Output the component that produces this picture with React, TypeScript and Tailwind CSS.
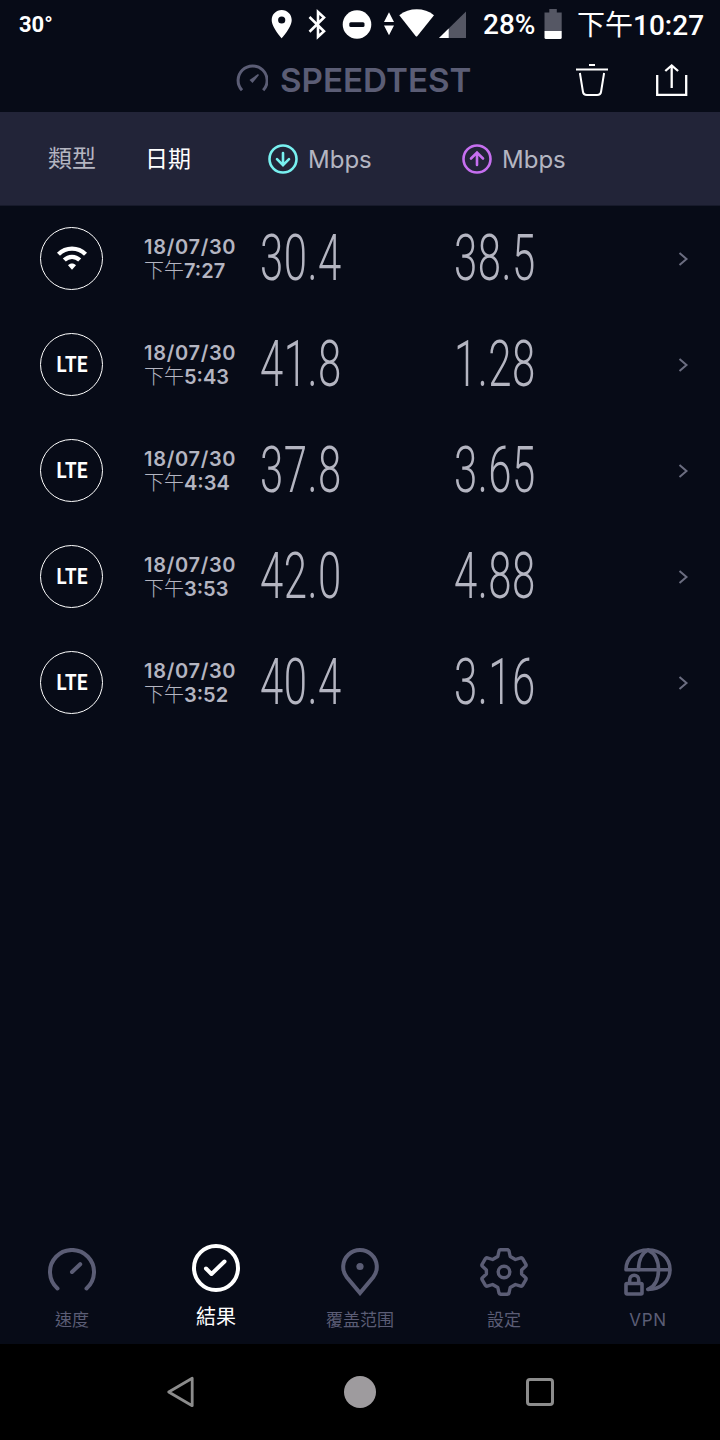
import React, { useState } from 'react';

interface Result {
  id: number;
  type: 'wifi' | 'lte';
  date: string;
  time: string;
  download: string;
  upload: string;
}

const results: Result[] = [
  { id: 1, type: 'wifi', date: '18/07/30', time: '7:27', download: '30.4', upload: '38.5' },
  { id: 2, type: 'lte', date: '18/07/30', time: '5:43', download: '41.8', upload: '1.28' },
  { id: 3, type: 'lte', date: '18/07/30', time: '4:34', download: '37.8', upload: '3.65' },
  { id: 4, type: 'lte', date: '18/07/30', time: '3:53', download: '42.0', upload: '4.88' },
  { id: 5, type: 'lte', date: '18/07/30', time: '3:52', download: '40.4', upload: '3.16' },
];

function StatusBar() {
  return (
    <div className="flex h-12 items-center whitespace-nowrap pl-[19px] font-['Roboto','Noto_Sans_CJK_TC',sans-serif] text-white">
      <span className="w-[252px] pt-px text-[22px] font-bold leading-none">30°</span>
      <svg className="h-12 w-[296px] shrink-0" viewBox="271 0 296 48" fill="#fff">
        {/* Location */}
        <path fillRule="evenodd" d="M281.7 10c-5.6 0-10 4.4-10 10 0 7.300 10 18.300 10 18.300s10-11 10-18.300c0-5.600-4.400-10-10-10zm0 13.600a3.600 3.600 0 1 1 0-7.200 3.600 3.600 0 0 1 0 7.200z" />
        {/* Bluetooth */}
        <path d="M309.500 17l14.500 14.200-6 5.500V12l6 5.500-14.500 14.200" fill="none" stroke="#fff" strokeWidth="2.600" />
        {/* Do not disturb */}
        <circle cx="357" cy="24.500" r="14.300" />
        <rect x="349.300" y="22.200" width="15.200" height="4.800" rx="1.500" fill="#070b17" />
        {/* Data arrows */}
        <path d="M389 12.300l5 9.700h-10zM389 35.300l5-9.700h-10z" />
        {/* Wifi signal */}
        <path d="M399.300 15.200C409 7.300 424.500 7.300 434 15.200L417.400 36q-.9 1.100-1.800 0z" />
        {/* Cell signal */}
        <path d="M466 11.500V38h-27z" fill="#555764" />
        <path d="M448.700 28.500V38H439z" />
        {/* Battery */}
        <path d="M544.500 12.500h4.800V9h7.500v3.500h4.900V31h-17.200z" fill="#555764" />
        <path d="M544.500 31h17.200v6.500q0 1.500-1.500 1.500H546q-1.500 0-1.500-1.500z" />
      </svg>
      <span className="-ml-[84px] w-[94px] pt-0.5 text-[28px] font-medium leading-none">28%</span>
      <span className="pt-[3px] text-[28px] font-medium leading-none">
        <span className="font-normal">下午</span>10:27
      </span>
    </div>
  );
}

function TitleBar() {
  return (
    <header className="flex h-16 items-center pl-[236px]">
      <svg className="h-8 w-8 shrink-0" viewBox="0 0 32 32" fill="none" stroke="#5b5d75" strokeWidth="3">
        <path d="M6 26.300A14.500 14.500 0 1 1 27.200 26.300" />
        <path d="M13.500 16l8.500-6 1 1-6.500 8z" fill="#5b5d75" stroke="none" />
      </svg>
      <h1 className="ml-3 w-[296px] font-['Inter',sans-serif] text-[33px] font-semibold leading-none text-[#5b5d75]">
        <span className="inline-block origin-left scale-x-[1.005]">SPEEDTEST</span>
      </h1>
      <button aria-label="Delete">
        <svg className="h-8 w-8" viewBox="0 0 32 32" fill="none" stroke="#fff" strokeWidth="2">
          <path d="M13 1h6M0 5.600h32" />
          <path d="M3.900 9l3 18.500q.5 3.500 4 3.500h10.200q3.500 0 4-3.500l3-18.500" />
        </svg>
      </button>
      <button aria-label="Share" className="ml-12">
        <svg className="h-8 w-8" viewBox="0 0 32 32" fill="none" stroke="#fff" strokeWidth="2.300">
          <path d="M1.200 11v19.800h29V11M15.700 24V1.500M9.300 7l6.400-5.500L22.100 7" />
        </svg>
      </button>
    </header>
  );
}

function DirectionIcon({ up }: { up?: boolean }) {
  return (
    <svg className="h-[30px] w-[30px] shrink-0" viewBox="0 0 30 30" fill="none" stroke={up ? '#c66ff0' : '#78f0f0'} strokeWidth="2.600" strokeLinecap="round">
      <circle cx="15" cy="15" r="13.500" />
      {up ? (
        <path d="M15 21V8.500M9 14.500l6-6 6 6" />
      ) : (
        <path d="M15 9v12M9 15.200l6 6 6-6" />
      )}
    </svg>
  );
}

function ColumnHeader() {
  return (
    <div className="flex h-[94px] items-center border-b border-[#171a2b] bg-[#222438] pl-12 font-['Inter','Noto_Sans_CJK_TC',sans-serif] text-2xl leading-none text-[#b4b5c1]">
      <span className="w-[97px]">類型</span>
      <span className="w-[123px] pt-px text-[23px] text-white">日期</span>
      <div className="flex w-[194px] items-center gap-2.5">
        <DirectionIcon />
        <span className="pt-[3px]">Mbps</span>
      </div>
      <div className="flex items-center gap-2.5">
        <DirectionIcon up />
        <span className="pt-[3px]">Mbps</span>
      </div>
    </div>
  );
}

function TypeBadge({ type }: { type: Result['type'] }) {
  return (
    <div className="mb-0.5 flex h-[63px] w-[63px] shrink-0 items-center justify-center rounded-full border-[1.5px] border-white">
      {type === 'wifi' ? (
        <svg className="h-6 w-8" viewBox="0 0 32 24" fill="none" stroke="#fff" strokeWidth="4.300">
          <path d="M2.500 8.200C10 .7 22 .7 29.500 8.200" />
          <path d="M8.300 14c4.400-4.300 11-4.300 15.400 0" />
          <path d="M12 19.300c2.300-2.300 5.700-2.300 8 0L16 23.700z" fill="#fff" stroke="none" />
        </svg>
      ) : (
        <span className="inline-block scale-x-[0.85] pl-0.5 pt-0.5 font-['Roboto',sans-serif] text-[22px] font-bold leading-none tracking-[0.5px] text-white">LTE</span>
      )}
    </div>
  );
}

function Speed({ value }: { value: string }) {
  return (
    <div className="w-[194px] pb-0.5">
      <span className="inline-block origin-left scale-x-[0.645] font-['Roboto',sans-serif] text-[65px] font-light leading-none tracking-[0.8px] text-[#b4b5c1]">
        {value}
      </span>
    </div>
  );
}

function ResultRow({ result }: { result: Result }) {
  return (
    <div className="flex h-[106px] items-center pl-10">
      <TypeBadge type={result.type} />
      <div className="ml-[41px] w-[116px] whitespace-nowrap pb-px font-['Inter','Noto_Sans_CJK_TC',sans-serif] text-xl font-semibold leading-6 text-[#b4b5c1]">
        <div className="tracking-[0.7px]">{result.date}</div>
        <div>
          <span className="font-light">下午</span>
          {result.time}
        </div>
      </div>
      <Speed value={result.download} />
      <Speed value={result.upload} />
      <svg className="ml-[30px] h-4 w-3" viewBox="0 0 12 16" fill="none" stroke="#6b6d80" strokeWidth="2">
        <path d="M1.500 2l7 6-7 6" />
      </svg>
    </div>
  );
}

const tabs = [
  {
    label: '速度',
    icon: (
      <>
        <path d="M9.500 40.500A22 22 0 1 1 38.500 40.500" />
        <path d="M24 24l8.200-7.800" />
      </>
    ),
  },
  {
    label: '結果',
    icon: (
      <>
        <circle cx="24" cy="24" r="22" />
        <path d="M14 24.500l5.500 5.500 13-12.500" />
      </>
    ),
  },
  {
    label: '覆盖范围',
    icon: (
      <>
        <path d="M24 45L10.800 29.200A16.800 16.800 0 1 1 37.200 29.200z" strokeLinejoin="miter" />
        <circle cx="24" cy="18.500" r="3.600" fill="currentColor" stroke="none" />
      </>
    ),
  },
  {
    label: '設定',
    icon: (
      <g strokeWidth="3.400">
        <path d="M20.500 1.800h7q1.200 0 1.500 1.200l1.200 5.500 5.200 3 5.300-1.700q1.200-.3 1.900.8l3.300 5.700q.6 1.100-.3 2l-4 3.700v4l4 3.700q.9.900.3 2l-3.300 5.700q-.7 1.100-1.900.8l-5.300-1.700-5.200 3-1.200 5.500q-.3 1.200-1.500 1.200h-7q-1.200 0-1.500-1.200l-1.200-5.500-5.200-3-5.300 1.700q-1.200.3-1.900-.8l-3.300-5.700q-.6-1.100.3-2l4-3.700v-4l-4-3.700q-.9-.9-.3-2l3.300-5.700q.7-1.100 1.900-.8l5.300 1.700 5.200-3 1.200-5.500q.3-1.200 1.500-1.200z" />
        <circle cx="24" cy="24" r="5.800" />
      </g>
    ),
  },
  {
    label: 'VPN',
    icon: (
      <g strokeWidth="3.600">
        <path d="M2 21.700C2 10 11.500 2 24 2s22 8 22 19.700-9.500 19.700-22 19.700M2 21.700h44" />
        <path d="M24 2c-6 3-9.500 10-9.500 19.700M24 2c6.500 3 10.500 10 10.500 19.700S31 38.400 24 41.400" />
        <rect x="2" y="35.500" width="16" height="10.500" rx="1" />
        <path d="M5.700 35v-3.300a4.500 4.500 0 0 1 9 0V35" />
      </g>
    ),
  },
];

function TabBar() {
  const [active, setActive] = useState(1);

  return (
    <nav className="grid h-[108px] grid-cols-5 font-['Inter','Noto_Sans_CJK_TC',sans-serif]">
      {tabs.map((tab, index) => (
        <button
          key={tab.label}
          onClick={() => setActive(index)}
          className={
            index === active
              ? 'flex flex-col items-center pt-2 text-xl leading-[26px] text-white'
              : 'flex flex-col items-center pt-3 text-[17px] leading-6 text-[#5b5d75]'
          }
        >
          <svg className="mb-3 h-12 w-12 shrink-0" viewBox="0 0 48 48" fill="none" stroke="currentColor" strokeWidth="4" strokeLinecap="round" strokeLinejoin="round">
            {tab.icon}
          </svg>
          <span className={tab.label === 'VPN' ? 'tracking-[0.7px]' : ''}>{tab.label}</span>
        </button>
      ))}
    </nav>
  );
}

function SystemNav() {
  return (
    <div className="flex h-24 items-center justify-center gap-[148px] bg-black">
      <svg className="h-8 w-8" viewBox="0 0 32 32" fill="none" stroke="#8c8c8c" strokeWidth="2.800" strokeLinejoin="round">
        <path d="M28.200 2.300v27.400L4.700 16z" />
      </svg>
      <div className="h-8 w-8 rounded-full bg-[#9e9b9e]" />
      <div className="flex w-8 justify-center">
        <div className="h-7 w-7 rounded-sm border-[3px] border-[#8c8c8c]" />
      </div>
    </div>
  );
}

function App() {
  return (
    <div className="flex h-[1440px] w-[720px] flex-col overflow-hidden bg-[#070b17]">
      <StatusBar />
      <TitleBar />
      <ColumnHeader />
      <main className="flex-1">
        {results.map(result => (
          <ResultRow key={result.id} result={result} />
        ))}
      </main>
      <TabBar />
      <SystemNav />
    </div>
  );
}

export default App;
